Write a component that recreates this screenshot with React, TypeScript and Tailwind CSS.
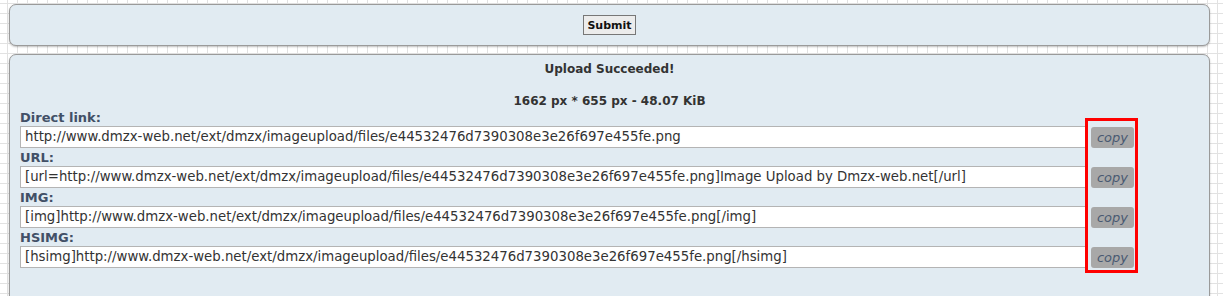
import React from "react";

const base = "http://www.dmzx-web.net/ext/dmzx/imageupload/files/e44532476d7390308e3e26f697e455fe.png";

const rows = [
  { label: "Direct link:", value: base },
  { label: "URL:", value: `[url=${base}]Image Upload by Dmzx-web.net[/url]` },
  { label: "IMG:", value: `[img]${base}[/img]` },
  { label: "HSIMG:", value: `[hsimg]${base}[/hsimg]` },
];

export default function App() {
  return (
    <div
      className="relative h-[296px] overflow-hidden bg-white pt-[4px] pl-[9px] bg-[linear-gradient(to_right,#e2e2e2_1px,transparent_1px),linear-gradient(to_bottom,#e2e2e2_1px,transparent_1px)] bg-[length:10px_10px] bg-[position:7px_3px] font-['DejaVu_Sans',Verdana,sans-serif]"
    >
      <div className="flex h-[42px] w-[1201px] items-center justify-center rounded-[7px] border border-[#9a9a9a] bg-[#e1ebf2] shadow-[0_1px_2px_rgba(0,0,0,0.25)]">
        <button className="h-[20px] border border-[#777] bg-[#ececec] px-[3px] text-[11px] font-bold leading-none text-[#111]">
          Submit
        </button>
      </div>

      <div className="mt-[8px] h-[260px] w-[1201px] rounded-t-[7px] border border-[#9a9a9a] bg-[#e1ebf2] px-[10px] pt-[6px] shadow-[0_1px_2px_rgba(0,0,0,0.25)]">
        <div className="text-center text-[12px] font-bold leading-[16px] text-[#333]">Upload Succeeded!</div>
        <div className="mt-[17px] text-center text-[12px] font-bold leading-[14px] text-[#333]">
          1662 px * 655 px - 48.07 KiB
        </div>
        <div className="flex flex-col">
          {rows.map((r) => (
            <div key={r.label} className="flex flex-col">
              <div className="h-[18px] pt-[2px] text-[13px] font-bold leading-[16px] text-[#425067]">{r.label}</div>
              <div className="flex h-[22px] items-center gap-[5px]">
                <div className="flex h-[22px] w-[1066px] items-center border border-[#b4b4b4] bg-white pl-[4px] text-[13.3px] text-[#333] whitespace-nowrap overflow-hidden">
                  {r.value}
                </div>
                <button className="h-[21px] w-[43px] rounded-[3px] bg-[#a8a8a8] text-[13px] italic leading-none text-[#4a5a72]">
                  copy
                </button>
              </div>
            </div>
          ))}
        </div>
      </div>

      <div className="absolute left-[1085px] top-[118px] h-[155px] w-[53px] border-[3px] border-[#ff0000]" />
    </div>
  );
}
